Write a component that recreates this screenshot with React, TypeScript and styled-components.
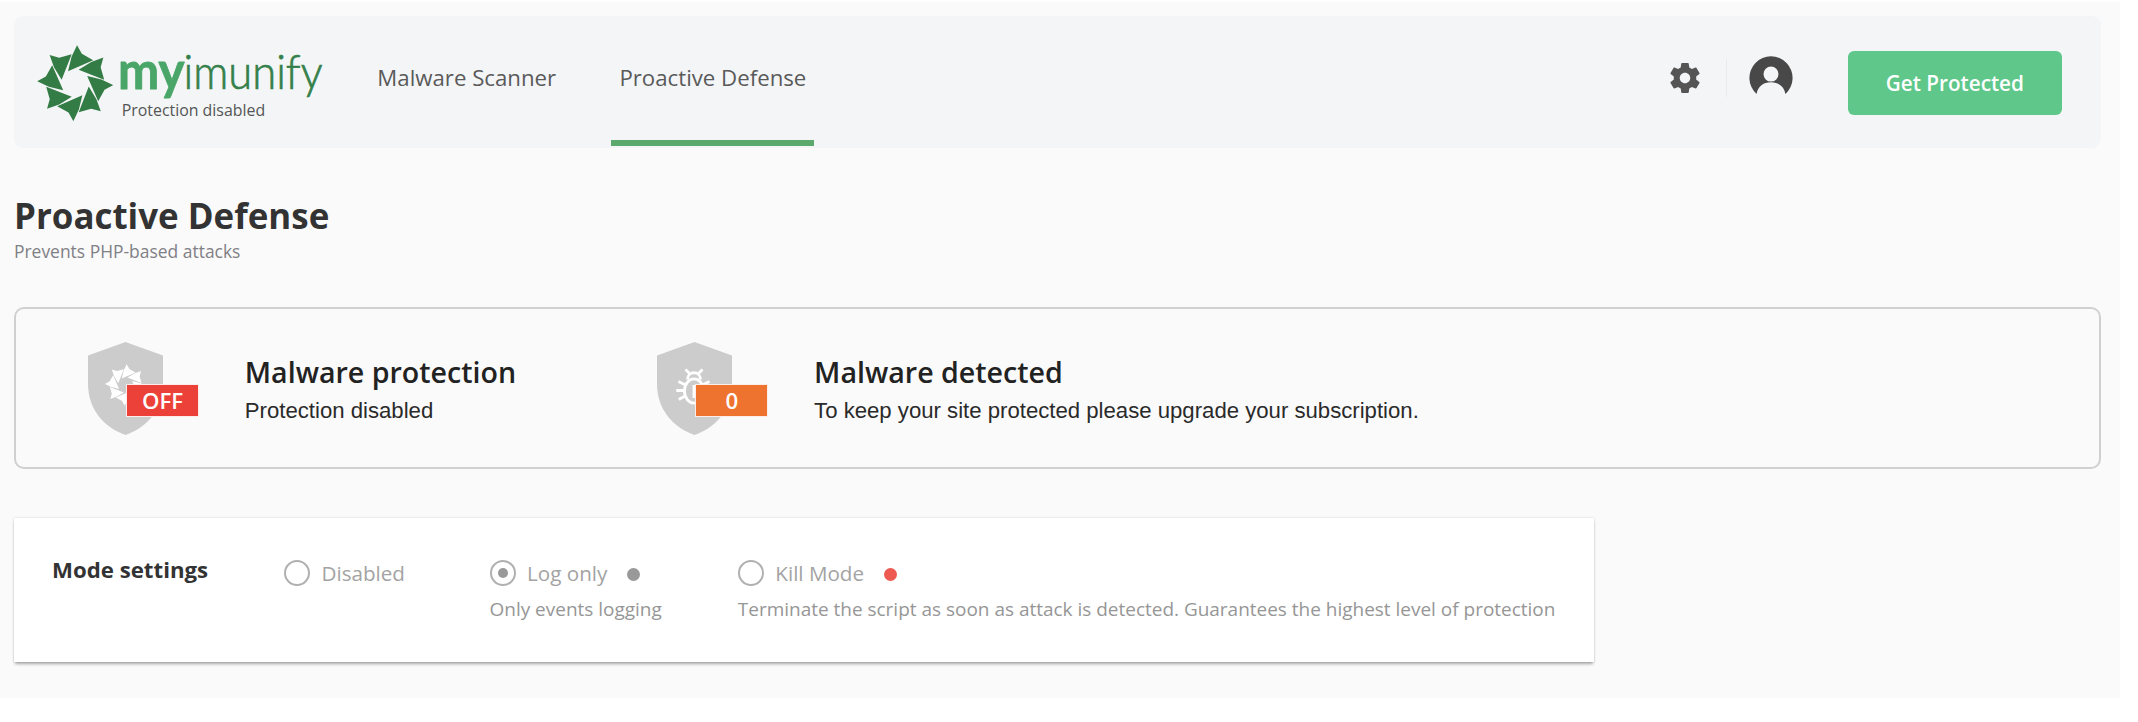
import React from 'react';
import styled, { createGlobalStyle } from 'styled-components';

const GlobalStyle = createGlobalStyle`
  *, *::before, *::after { box-sizing: border-box; }
  body { margin: 0; background: #ffffff; font-family: 'Open Sans', sans-serif; }
  h1, h2, h3, p { margin: 0; }
  svg { display: block; }
`;

const Page = styled.main`
  width: 2120px;
  height: 696px;
  margin-top: 2px;
  padding: 14px 19px 0 14px;
  background: #fafafa;
`;

const Header = styled.header`
  display: flex;
  height: 131.7px;
  padding: 0 39.3px 0 23px;
  border-radius: 9px;
  background: #f3f5f7;
`;

const Brand = styled.div`
  display: flex;
  gap: 7px;
  width: 332.3px;
  padding-top: 29px;
`;

const BrandText = styled.div`
  padding-top: 9px;
`;

const Tagline = styled.div`
  margin: -0.6px 0 0 1.3px;
  font-size: 15.9px;
  line-height: 22px;
  color: #555555;
`;

const Nav = styled.nav`
  display: flex;
  gap: 47.3px;
`;

const Tab = styled.a<{ $active?: boolean }>`
  display: flex;
  flex-direction: column;
  justify-content: space-between;
  padding: 46px 0 1.5px;
  font-size: 22.22px;
  line-height: 31px;
  color: #5a5a5a;

  &::after {
    content: '';
    height: 6.6px;
    background: ${({ $active }) => ($active ? '#5ba96c' : 'transparent')};
  }
`;

const TabLabel = styled.span`
  padding: 0 8px;
`;

const Actions = styled.div`
  display: flex;
  align-items: flex-start;
  margin-left: auto;
`;

const SettingsButton = styled.div`
  margin-top: 44px;
`;

const Divider = styled.div`
  width: 1px;
  height: 38px;
  margin: 43px 22px 0 23px;
  background: #e9ebed;
`;

const Avatar = styled.div`
  margin-top: 40px;
`;

const ProtectButton = styled.button`
  width: 213.7px;
  height: 63.7px;
  margin: 35px 0 0 55px;
  padding: 1px 0 0;
  border: 0;
  border-radius: 6px;
  background: #5ec789;
  font: 600 20.7px/28px 'Open Sans', sans-serif;
  color: #ffffff;
`;

const Heading = styled.h1`
  margin-top: 44.6px;
  font-size: 34.92px;
  font-weight: 700;
  line-height: 47px;
  color: #333333;
`;

const Subheading = styled.p`
  margin-top: -0.6px;
  font-size: 17.46px;
  line-height: 24px;
  color: #808085;
`;

const StatusCard = styled.section`
  display: flex;
  height: 161.6px;
  margin-top: 44.7px;
  padding: 33px 0 0 72px;
  border: 2px solid #d0d0d0;
  border-radius: 10px;
`;

const StatusItem = styled.article`
  display: flex;
  flex: none;
  width: 569.3px;
`;

const ShieldBox = styled.div`
  position: relative;
  flex: none;
  width: 156.8px;
`;

const Badge = styled.span<{ $color: string }>`
  position: absolute;
  left: 38px;
  top: 41.5px;
  width: 73px;
  height: 33px;
  border: 1.5px solid #fcecea;
  background: ${({ $color }) => $color};
  font-size: 22.2px;
  font-weight: 600;
  line-height: 31px;
  text-align: center;
  color: #ffffff;
`;

const StatusText = styled.div`
  padding-top: 9.2px;
  white-space: nowrap;
`;

const StatusTitle = styled.h2`
  font-size: 28.57px;
  font-weight: 600;
  line-height: 39px;
  color: #222222;
`;

const StatusNote = styled.p`
  margin-top: 0.5px;
  font-family: 'Liberation Sans', sans-serif;
  font-size: 22.16px;
  line-height: 40px;
  color: #2a2a2a;
`;

const ModeCard = styled.section`
  display: flex;
  width: 1580px;
  height: 144.4px;
  margin-top: 48.7px;
  padding-left: 38px;
  background: #ffffff;
  box-shadow: 0 3px 3px -1px rgba(0, 0, 0, 0.32), 0 0 2px rgba(0, 0, 0, 0.16);
`;

const ModeTitle = styled.h3`
  width: 232px;
  padding-top: 37.3px;
  font-size: 22.22px;
  font-weight: 700;
  line-height: 30px;
  color: #333333;
`;

const Options = styled.div`
  display: grid;
  grid-template-columns: 205.5px 248.3px auto;
  padding-top: 42.7px;
  white-space: nowrap;
`;

const OptionRow = styled.label`
  display: flex;
  align-items: center;
  height: 26px;
  font-size: 20.64px;
  line-height: 26px;
  color: #a3a3a3;
`;

const Radio = styled.span<{ $checked?: boolean }>`
  display: grid;
  place-items: center;
  width: 26px;
  height: 26px;
  margin-right: 11.5px;
  border: 2px solid #b0b0b0;
  border-radius: 50%;

  &::after {
    content: '';
    width: 10px;
    height: 10px;
    border-radius: 50%;
    background: ${({ $checked }) => ($checked ? '#999999' : 'transparent')};
  }
`;

const Dot = styled.span<{ $color: string }>`
  width: 13px;
  height: 13px;
  margin: 3px 0 0 19.5px;
  border-radius: 50%;
  background: ${({ $color }) => $color};
`;

const OptionNote = styled.p`
  margin-top: 9.6px;
  font-size: 18.98px;
  line-height: 26px;
  color: #969696;
`;

const BLADE = 'M5.5 -114 L-11 -79 L-21.5 -36 L54 -69 L20 -88 Z';

function Blades({ color }: { color: string }) {
  return (
    <g fill={color}>
      {[0, 45, 90, 135, 180, 225, 270, 315].map((angle) => (
        <path key={angle} d={BLADE} transform={`rotate(${angle})`} />
      ))}
    </g>
  );
}

function Wordmark() {
  return (
    <svg width="206" height="46" viewBox="0 0 206 46" overflow="visible" fontFamily="Lato, sans-serif">
      <text x="-2" y="35" fontSize="51" fontWeight="700" fill="#4aa668" stroke="#4aa668" strokeWidth="0.8" strokeLinejoin="round" textLength="66.5" lengthAdjust="spacingAndGlyphs">my</text>
      <text x="63.5" y="35" fontSize="47" fontWeight="300" fill="#34804a" stroke="#34804a" strokeWidth="0.7" textLength="139" lengthAdjust="spacingAndGlyphs">imunify</text>
    </svg>
  );
}

function GearIcon() {
  return (
    <svg width="36" height="36" viewBox="0 0 24 24" fill="#555555">
      <path d="M19.43 12.98c.04-.32.07-.64.07-.98s-.03-.66-.07-.98l2.11-1.65c.19-.15.24-.42.12-.64l-2-3.46c-.12-.22-.39-.3-.61-.22l-2.49 1c-.52-.4-1.08-.73-1.69-.98l-.38-2.65C14.46 2.18 14.25 2 14 2h-4c-.25 0-.46.18-.49.42l-.38 2.65c-.61.25-1.17.59-1.69.98l-2.49-1c-.23-.09-.49 0-.61.22l-2 3.46c-.13.22-.07.49.12.64l2.11 1.65c-.04.32-.07.65-.07.98s.03.66.07.98l-2.11 1.65c-.19.15-.24.42-.12.64l2 3.46c.12.22.39.3.61.22l2.49-1c.52.4 1.08.73 1.69.98l.38 2.65c.03.24.24.42.49.42h4c.25 0 .46-.18.49-.42l.38-2.65c.61-.25 1.17-.59 1.69-.98l2.49 1c.23.09.49 0 .61-.22l2-3.46c.12-.22.07-.49-.12-.64l-2.11-1.65zM12 15.5c-1.93 0-3.5-1.57-3.5-3.5s1.57-3.5 3.5-3.5 3.5 1.57 3.5 3.5-1.57 3.5-3.5 3.5z" />
    </svg>
  );
}

function UserIcon() {
  return (
    <svg width="44" height="40" viewBox="0 0 44 40">
      <path
        fill="#484848"
        fillRule="evenodd"
        d="M7.6 38 A21.6 21.6 0 1 1 36.4 38 C35.4 31 30 26.3 22 26.3 S8.6 31 7.6 38 Z M22 10.6 A7.5 7.5 0 1 0 22 25.6 A7.5 7.5 0 1 0 22 10.6 Z"
      />
    </svg>
  );
}

function Shield({ children }: { children: React.ReactNode }) {
  return (
    <svg width="75" height="93" viewBox="0 0 75 93">
      <path fill="#cccccc" d="M37.5 0 L75 13.5 V42 C75 68 58 86 37.5 93 C17 86 0 68 0 42 V13.5 Z" />
      {children}
    </svg>
  );
}

function BugMark() {
  return (
    <g fill="none" stroke="#ffffff" strokeWidth="2.8">
      <ellipse cx="37" cy="49" rx="9.5" ry="12.2" />
      <path d="M30.5 37.5 C30.5 28.5 43.5 28.5 43.5 37.5" />
      <path d="M28.5 27.5 L33 32 M45.5 27.5 L41 32" />
      <path d="M19.3 48.5 H28 M21.5 39.5 L28.5 43 M21.8 57.5 L28.5 53.8 M52.5 39.5 L45.5 43" />
      <path d="M37 43 V56" />
    </g>
  );
}

export default function App() {
  return (
    <>
      <GlobalStyle />
      <Page>
        <Header>
          <Brand>
            <svg width="76.4" height="76.4" viewBox="-114.6 -114.6 229.2 229.2">
              <Blades color="#347c45" />
            </svg>
            <BrandText>
              <Wordmark />
              <Tagline>Protection disabled</Tagline>
            </BrandText>
          </Brand>
          <Nav>
            <Tab>
              <TabLabel>Malware Scanner</TabLabel>
            </Tab>
            <Tab $active>
              <TabLabel>Proactive Defense</TabLabel>
            </Tab>
          </Nav>
          <Actions>
            <SettingsButton>
              <GearIcon />
            </SettingsButton>
            <Divider />
            <Avatar>
              <UserIcon />
            </Avatar>
            <ProtectButton>Get Protected</ProtectButton>
          </Actions>
        </Header>

        <Heading>Proactive Defense</Heading>
        <Subheading>Prevents PHP-based attacks</Subheading>

        <StatusCard>
          <StatusItem>
            <ShieldBox>
              <Shield>
                <g transform="translate(37.7 43) scale(0.182)">
                  <Blades color="#ffffff" />
                </g>
              </Shield>
              <Badge $color="#ec4138">OFF</Badge>
            </ShieldBox>
            <StatusText>
              <StatusTitle>Malware protection</StatusTitle>
              <StatusNote>Protection disabled</StatusNote>
            </StatusText>
          </StatusItem>
          <StatusItem>
            <ShieldBox>
              <Shield>
                <BugMark />
              </Shield>
              <Badge $color="#ee732f">0</Badge>
            </ShieldBox>
            <StatusText>
              <StatusTitle>Malware detected</StatusTitle>
              <StatusNote>To keep your site protected please upgrade your subscription.</StatusNote>
            </StatusText>
          </StatusItem>
        </StatusCard>

        <ModeCard>
          <ModeTitle>Mode settings</ModeTitle>
          <Options>
            <div>
              <OptionRow>
                <Radio />
                Disabled
              </OptionRow>
            </div>
            <div>
              <OptionRow>
                <Radio $checked />
                Log only
                <Dot $color="#999999" />
              </OptionRow>
              <OptionNote>Only events logging</OptionNote>
            </div>
            <div>
              <OptionRow>
                <Radio />
                Kill Mode
                <Dot $color="#ee5a52" />
              </OptionRow>
              <OptionNote>
                Terminate the script as soon as attack is detected. Guarantees the highest level of protection
              </OptionNote>
            </div>
          </Options>
        </ModeCard>
      </Page>
    </>
  );
}
